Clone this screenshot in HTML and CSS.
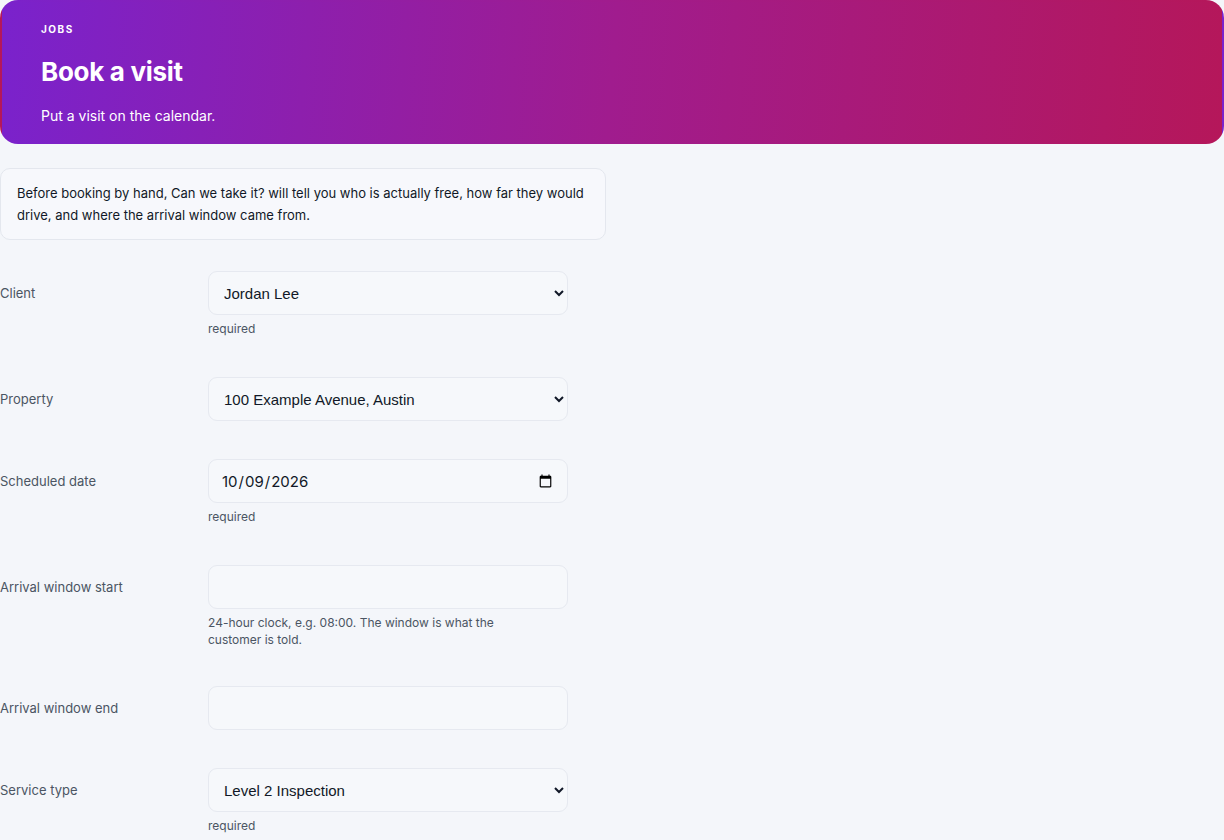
FILE: index.html
```html
<!DOCTYPE html>
<html lang="en">
<head>
    <meta charset="UTF-8">
    <meta name="viewport" content="width=device-width, initial-scale=1.0">
    <title>Book a visit</title>
    <link rel="stylesheet" href="styles.css">
</head>
<body>
<header class="hero">
    <div class="eyebrow">JOBS</div>
    <h1>Book a visit</h1>
    <p>Put a visit on the calendar.</p>
</header>

<div class="notice">
    Before booking by hand, Can we take it? will tell you who is actually free, how far they would drive, and where the arrival window came from.
</div>

<form class="form">
    <div class="row">
        <label for="client">Client</label>
        <div class="field">
            <select id="client">
                <option>Jordan Lee</option>
            </select>
            <div class="help req">required</div>
        </div>
    </div>

    <div class="row">
        <label for="property">Property</label>
        <div class="field">
            <select id="property">
                <option>100 Example Avenue, Austin</option>
            </select>
        </div>
    </div>

    <div class="row">
        <label for="date">Scheduled date</label>
        <div class="field">
            <input type="date" id="date" value="2026-10-09">
            <div class="help req">required</div>
        </div>
    </div>

    <div class="row">
        <label for="start">Arrival window start</label>
        <div class="field">
            <input type="text" id="start">
            <div class="help">24-hour clock, e.g. 08:00. The window is what the customer is told.</div>
        </div>
    </div>

    <div class="row">
        <label for="end">Arrival window end</label>
        <div class="field">
            <input type="text" id="end">
        </div>
    </div>

    <div class="row">
        <label for="service">Service type</label>
        <div class="field">
            <select id="service">
                <option>Level 2 Inspection</option>
            </select>
            <div class="help req">required</div>
        </div>
    </div>
</form>
</body>
</html>
```

FILE: styles.css
```css
body {
    font-family: Inter, "Noto Sans", sans-serif;
    margin: 0;
    padding: 0;
    background-color: #f4f6fa;
    color: #111827;
}

.hero {
    border: 2px solid transparent;
    border-radius: 18px;
    background-image: linear-gradient(95deg, #7a22cc 0%, #a01c8e 50%, #b5175a 100%);
    color: white;
    padding: 20px 39px 19px;
    height: 101px;
}

.eyebrow {
    font-size: 10px;
    font-weight: 700;
    letter-spacing: 1.5px;
    line-height: 14px;
}

.hero h1 {
    margin: 19px 0 0;
    font-size: 26px;
    font-weight: 700;
    line-height: 34px;
    letter-spacing: -0.3px;
}

.hero p {
    margin: 17px 0 0;
    font-size: 14px;
    line-height: 20px;
}

.notice {
    margin-top: 24px;
    width: 572px;
    padding: 13px 16px;
    border: 1px solid #e4e7ee;
    border-radius: 10px;
    background-color: #f7f8fc;
    font-size: 13px;
    line-height: 22px;
    color: #111827;
}

.form {
    margin-top: 31px;
    display: flex;
    flex-direction: column;
    gap: 38px;
}

.row {
    display: flex;
    align-items: flex-start;
}

.row label {
    width: 208px;
    flex-shrink: 0;
    font-size: 13px;
    line-height: 44px;
    color: #4b5563;
}

.field {
    width: 360px;
}

select, input {
    box-sizing: border-box;
    width: 360px;
    height: 44px;
    border: 1px solid #e6e9f0;
    border-radius: 9px;
    background-color: #f6f8fb;
    color: #111827;
    margin: 0;
}

select {
    font-family: "Liberation Sans", Arial, sans-serif;
    font-size: 15px;
    padding: 0 8px 0 11px;
}

input {
    font-family: Inter, sans-serif;
    font-size: 15px;
    padding: 0 12px;
}

.help {
    margin-top: 5px;
    width: 300px;
    font-size: 12px;
    line-height: 17px;
    color: #4b5563;
}

.req {
    height: 19px;
}
```
